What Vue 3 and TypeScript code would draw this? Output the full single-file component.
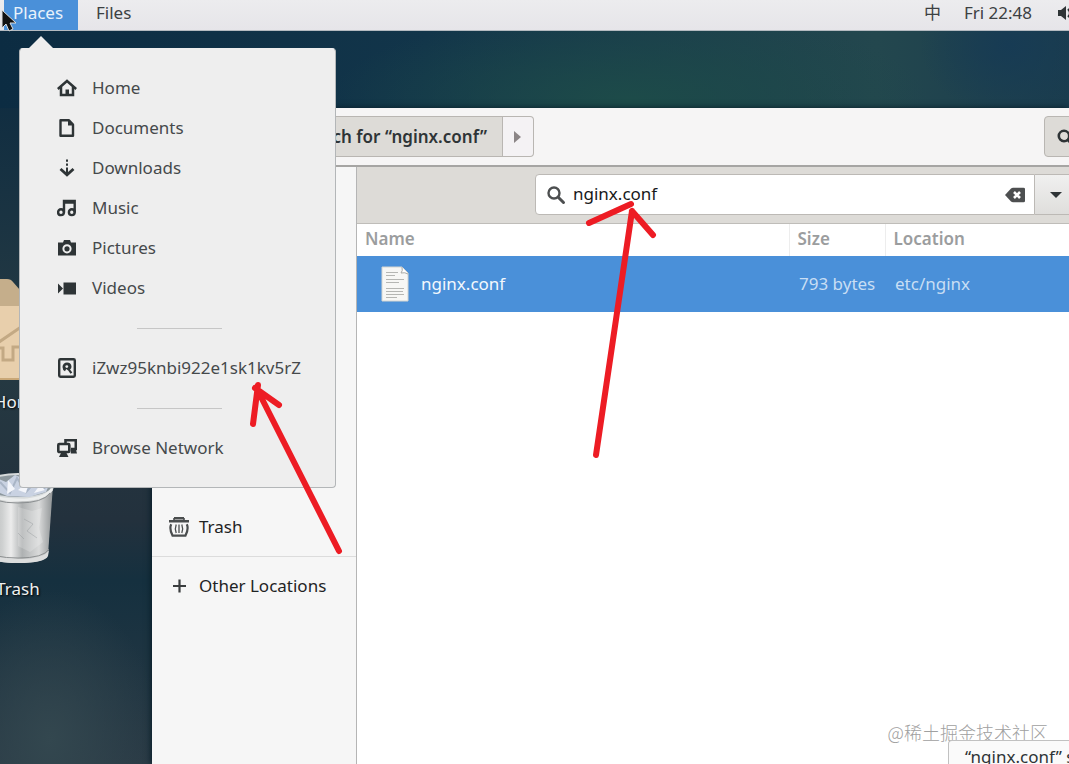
<script setup lang="ts">
import { ref } from 'vue'

interface Place {
  id: string
  label: string
}

const folders: Place[] = [
  { id: 'home', label: 'Home' },
  { id: 'documents', label: 'Documents' },
  { id: 'downloads', label: 'Downloads' },
  { id: 'music', label: 'Music' },
  { id: 'pictures', label: 'Pictures' },
  { id: 'videos', label: 'Videos' },
]

const query = ref('nginx.conf')
const files = [{ name: 'nginx.conf', size: '793 bytes', location: 'etc/nginx' }]
</script>

<template>
  <div class="desktop">
    <header class="topbar">
      <nav class="menus">
        <button class="menu-button active" type="button">Places</button>
        <button class="menu-button" type="button">Files</button>
      </nav>
      <div class="status">
        <span class="input-method">中</span>
        <time class="clock">Fri 22:48</time>
        <svg class="volume" width="16" height="16" viewBox="0 0 16 16">
          <path d="M0 5h3l5-4v14l-5-4H0z" fill="#2e3436" />
          <path d="M10 4q4 4 0 8" fill="none" stroke="#2e3436" stroke-width="2" />
        </svg>
      </div>
    </header>

    <div class="desk-icon home-icon">
      <svg width="64" height="104" viewBox="15 0 64 104">
        <path d="M0 5q0-4 4-4h32q4 0 6 3l7 8h15v30H0z" fill="#c5ae8b" />
        <path d="M0 28h64v70q0 4-4 4H4q-4 0-4-4z" fill="#e8cfac" />
        <path d="M0 100h64v2H0z" fill="#c9a777" />
        <path d="M28 64l22-15M28 70h4v12h10V69h14" fill="none" stroke="#c3a984" stroke-width="3" />
      </svg>
      <span>Home</span>
    </div>

    <div class="desk-icon trash-icon">
      <svg width="72" height="92" viewBox="0 0 72 92">
        <defs>
          <linearGradient id="bin-body" x1="0" x2="1" y1="0" y2="0">
            <stop offset="0" stop-color="#a5a8a9" />
            <stop offset="0.28" stop-color="#cfd1d1" />
            <stop offset="0.4" stop-color="#ececec" />
            <stop offset="0.56" stop-color="#aeb1b2" />
            <stop offset="0.8" stop-color="#d9dada" />
            <stop offset="1" stop-color="#8d9193" />
          </linearGradient>
        </defs>
        <path d="M1 12l5 70q3 8 30 8t30-8l5-70z" fill="url(#bin-body)" />
        <path d="M6 78q4 8 30 8t31-9l-1 6q-3 7-30 7T6 83z" fill="#dcdddd" />
        <path d="M6 77q4 8 30 8t31-9" fill="none" stroke="#8e9192" />
        <ellipse cx="36" cy="13" rx="35" ry="12" fill="#8c979d" stroke="#d6dadb" stroke-width="2" />
        <path d="M4 14l10-9 10 4 9-7 12 5 9-3 13 8-3 7-17 5-22-1z" fill="#c9d2e2" />
        <path d="M18 9l10 11 7-15 9 14 11-12 8 9" fill="none" stroke="#a9b5c6" stroke-width="2" />
        <path d="M26 7l7 9-8 5zM47 8l-3 12-8-3zM52 20l6-8 5 5z" fill="#f4f6fb" />
        <path d="M2 16q7 11 34 11t34-11" fill="none" stroke="#eceeee" stroke-width="3" />
        <path d="M3 20q8 10 33 10t32-10" fill="none" stroke="#8b8f91" />
        <path d="M36 34l14 4 10-3-3 20 4 14-13 10-12-6z" fill="#ffffff" opacity="0.2" />
        <path d="M42 46l9 5-6 7 10 7M36 60l6 6" fill="none" stroke="#8f9496" opacity="0.4" />
      </svg>
      <span>Trash</span>
    </div>

    <main class="window">
      <div class="headerbar">
        <div class="pathbar">
          <button class="crumb" type="button">Search for “nginx.conf”</button>
          <button class="crumb-next" type="button" aria-label="Next folder">
            <svg width="8" height="12" viewBox="0 0 8 12"><path d="M0 0l7 6-7 6z" fill="#8b8586" /></svg>
          </button>
        </div>
        <button class="search-toggle" type="button" aria-label="Search">
          <svg width="18" height="18" viewBox="0 0 18 18">
            <circle cx="7" cy="8" r="5.200" fill="none" stroke="#2e3436" stroke-width="2.600" />
            <path d="M11 12l5 5" stroke="#2e3436" stroke-width="3" stroke-linecap="round" />
          </svg>
        </button>
      </div>

      <div class="content">
        <aside class="sidebar">
          <a class="side-item" href="#trash">
            <svg width="20" height="20" viewBox="0 0 20 20" fill="none" stroke="#4a4d4e">
              <path d="M0 4.200h20M5 1.200h10" stroke-width="2.400" />
              <path d="M5 1v3M15 1v3" stroke-width="1.600" />
              <path d="M2.200 7.200c-1.400 3-.4 8 1.300 11.400h13c1.700-3.400 2.700-8.400 1.300-11.400" stroke-width="2.200" />
              <path d="M7.200 7.500q-1.600 4 0 8.500M12.800 7.500q1.600 4 0 8.500M10 7.500v8.500" stroke-width="1.300" />
            </svg>
            <span>Trash</span>
          </a>
          <a class="side-item other" href="#other">
            <svg width="20" height="20" viewBox="0 0 20 20"><path d="M4 10h13M10.500 3.500v13" stroke="#3a3d3e" stroke-width="2.200" /></svg>
            <span>Other Locations</span>
          </a>
        </aside>

        <section class="results">
          <form class="searchbar" @submit.prevent>
            <div class="entry">
              <svg width="20" height="20" viewBox="0 0 20 20">
                <circle cx="7" cy="8" r="5.500" fill="none" stroke="#4d4f50" stroke-width="2.400" />
                <path d="M11.500 12.500l5 5" stroke="#4d4f50" stroke-width="3" stroke-linecap="round" />
              </svg>
              <input v-model="query" type="text" aria-label="Search files" />
              <button class="clear" type="button" aria-label="Clear" @click="query = ''">
                <svg width="20" height="16" viewBox="0 0 20 16">
                  <path d="M0 8l6-6.500q1-.8 2-.8h10.500q1.500 0 1.500 1.300v12q0 1.300-1.500 1.300H8q-1 0-2-.8z" fill="#4d4f50" />
                  <path d="M9 5l6 6M15 5l-6 6" stroke="#fff" stroke-width="2.600" />
                </svg>
              </button>
            </div>
            <button class="filter" type="button" aria-label="Filter">
              <svg width="12" height="6" viewBox="0 0 12 6"><path d="M0 0h12L6 6z" fill="#2e3436" /></svg>
            </button>
          </form>

          <table class="files">
            <thead>
              <tr>
                <th scope="col">Name</th>
                <th scope="col" class="col-size">Size</th>
                <th scope="col" class="col-location">Location</th>
              </tr>
            </thead>
            <tbody>
              <tr v-for="file in files" :key="file.name">
                <td>
                  <div class="file-name">
                    <svg width="28" height="36" viewBox="0 0 28 36">
                      <path d="M1 1h20l6 6v28H1z" fill="#f7f7f5" stroke="#d5d5d0" />
                      <path d="M21 1q1 4-1 6 4-1 7 1" fill="#fff" stroke="#a9aaa6" />
                      <path d="M5 6.500h12M5 9.500h9M5 13.500h18M5 16.500h13M5 22.500h18M5 25.500h17M5 28.500h18M5 31.500h11" stroke="#b5b6b3" />
                    </svg>
                    <span>{{ file.name }}</span>
                  </div>
                </td>
                <td class="dim size">{{ file.size }}</td>
                <td class="dim location">{{ file.location }}</td>
              </tr>
            </tbody>
          </table>
        </section>
      </div>
      <span class="watermark">@稀土掘金技术社区</span>
      <div class="statusbar">“nginx.conf” selected (793 bytes)</div>
    </main>

    <nav class="places" aria-label="Places">
      <svg class="pointer" width="28" height="14" viewBox="0 0 28 14"><path d="M0 14L14 0l14 14z" fill="#eeeeee" /></svg>
      <a v-for="place in folders" :key="place.id" class="place" :href="'#' + place.id">
        <svg width="20" height="20" viewBox="0 0 20 20" fill="none" stroke="#2e3436">
          <g v-if="place.id === 'home'">
            <path d="M.8 11L10 3l9.200 8" stroke-width="2.500" />
            <path d="M4 9v8h12V9" stroke-width="2.500" />
            <path d="M8.500 11.500h3.500V17H8.500z" fill="#2e3436" stroke="none" />
          </g>
          <g v-else-if="place.id === 'documents'">
            <path d="M3.500 2.200H12L16 6.500v11.300H3.500z" stroke-width="2.400" stroke-linejoin="round" />
            <path d="M11 2v5.500h5z" fill="#2e3436" stroke="none" />
          </g>
          <g v-else-if="place.id === 'downloads'">
            <path d="M10 1.500v2.200M10 5.500v2.200M10 9.500v6" stroke-width="2" />
            <path d="M3.500 11l6.500 5.800 6.500-5.800" stroke-width="2.800" />
          </g>
          <g v-else-if="place.id === 'music'" stroke-width="2.400">
            <circle cx="4" cy="14.200" r="2.900" />
            <circle cx="14.800" cy="14.200" r="2.900" />
            <path d="M7 14.500V3h10.700v11.500M7 4.500h10" />
          </g>
          <g v-else-if="place.id === 'pictures'">
            <path d="M1 4.500h5l1-2.500h6l1 2.500h5v13H1z" fill="#2e3436" stroke="none" />
            <circle cx="10" cy="10.800" r="3.600" stroke="#eee" stroke-width="2" />
          </g>
          <g v-else fill="#2e3436" stroke="none">
            <path d="M6.500 4.500H19v12H6.500zM1 5.500l5 5-5 5z" />
          </g>
        </svg>
        <span>{{ place.label }}</span>
      </a>
      <hr />
      <a class="place" href="#computer">
        <svg width="20" height="20" viewBox="0 0 20 20">
          <rect x="2.200" y="1.200" width="15.600" height="17.600" rx="1.200" fill="none" stroke="#2e3436" stroke-width="2.400" />
          <path d="M10 4.500a4.500 4.500 0 0 0-4.500 4.500q0 3 2.500 4.300l1.200-2.300 2 1.500 2.300 3.300 1.800-1.400-2.300-2.800q1.700-1.200 1.500-3A4.500 4.500 0 0 0 10 4.500z" fill="#2e3436" />
          <circle cx="9.800" cy="8.600" r="1.400" fill="#eee" />
        </svg>
        <span>iZwz95knbi922e1sk1kv5rZ</span>
      </a>
      <hr />
      <a class="place" href="#network">
        <svg width="20" height="20" viewBox="0 0 20 20">
          <path d="M8.500 5V2.200h10.300V11H14" fill="none" stroke="#2e3436" stroke-width="2.600" />
          <rect x="1.300" y="6" width="11" height="8" rx="1" fill="#eee" stroke="#2e3436" stroke-width="2.600" />
          <path d="M4.500 14h4.500l2.500 5H2zM13.800 11h5l1.200 4.500h-6.200z" fill="#2e3436" />
        </svg>
        <span>Browse Network</span>
      </a>
    </nav>

    <svg class="annotations" width="680" height="570" viewBox="0 0 680 570">
      <g fill="none" stroke="#ed1c24" stroke-width="6" stroke-linecap="round" stroke-linejoin="round">
        <path d="M596 455L632 211M589 223L631 204M632 211L653 235" />
        <path d="M339 551L257 389M253 424L258 385M255 388L279 405" />
      </g>
    </svg>

    <svg class="cursor" width="18" height="24" viewBox="0 0 18 24">
      <path d="M2 1v18l4-4 3 7 4-2-3-6h6z" fill="#111" stroke="#ddd" stroke-width="1" />
    </svg>
  </div>
</template>

<style>
body {
  margin: 0;
}
</style>

<style scoped>
.desktop {
  position: relative;
  height: 100vh;
  overflow: hidden;
  color: #2e3436;
  font-family: "Noto Sans", "Noto Sans CJK SC", sans-serif;
  font-size: 17px;
  line-height: 24px;
  background:
    radial-gradient(ellipse 300px 90px at 630px 100px, #1d4b49, transparent),
    radial-gradient(ellipse 90px 70px at 1010px 45px, #173b54, transparent),
    radial-gradient(ellipse 110px 150px at 50px 740px, #33474f, transparent),
    linear-gradient(90deg, #0c2c42, #12354a 40%, #23474e 82%, #1a3c4e) top / 100% 108px no-repeat,
    linear-gradient(#0e2c41 10%, #253a43 45%, #23313d 68%, #15303f 76%, #2a3a45);
}

button {
  box-sizing: border-box;
  margin: 0;
  font: inherit;
  color: inherit;
}

a {
  color: inherit;
  text-decoration: none;
}

svg {
  display: block;
  flex: none;
}

.topbar {
  box-sizing: border-box;
  display: flex;
  justify-content: space-between;
  height: 31px;
  padding-left: 4px;
  overflow: hidden;
  color: #3c4042;
  background: linear-gradient(#ececee, #e6e5e9);
  border-bottom: 1px solid #b4bac0;
}

.menus,
.status {
  display: flex;
}

.menu-button {
  padding: 0 12px 4px 18px;
  border: 0;
  background: none;
}

.menu-button.active {
  width: 74px;
  padding: 0 0 4px 9px;
  text-align: left;
  color: #e9f2fb;
  background: #4a90d9;
}

.status {
  gap: 24px;
  height: 26px;
  align-items: center;
  margin-right: -5px;
}

.clock {
  margin-right: 2px;
}

.input-method {
  margin-right: -1px;
}

.desk-icon {
  position: absolute;
  display: flex;
  flex-direction: column;
  align-items: center;
  color: #eef1f2;
  text-shadow: 1px 1px 2px #000;
}

.home-icon {
  top: 278px;
  left: -14px;
  gap: 8px;
}

.trash-icon {
  top: 473px;
  left: -18px;
  gap: 12px;
}

.window {
  position: absolute;
  top: 108px;
  right: 0;
  bottom: 0;
  left: 152px;
  display: flex;
  flex-direction: column;
  background: #fff;
  box-shadow: -1px 0 6px #071c28;
}

.headerbar {
  box-sizing: border-box;
  display: flex;
  justify-content: space-between;
  height: 59px;
  padding: 8px 0 8px 120px;
  background: #f6f5f5;
  border-bottom: 2px solid #a6a5a3;
}

.pathbar {
  display: flex;
}

.crumb {
  width: 231px;
  padding: 0 15px 0 0;
  text-align: right;
  white-space: nowrap;
  font-weight: 600;
  background: #dddbd7;
  border: 1px solid #b9b6b2;
}

.crumb-next {
  display: grid;
  place-items: center;
  width: 31px;
  padding: 0;
  background: #f4f2f4;
  border: 1px solid #b9b6b2;
  border-left: 0;
  border-radius: 0 4px 4px 0;
}

.search-toggle {
  width: 34px;
  margin-right: -9px;
  padding: 0 0 0 12px;
  background: #dddbd7;
  border: 1px solid #b9b6b2;
  border-radius: 4px 0 0 4px;
}

.content {
  display: flex;
  flex: 1;
  min-height: 0;
}

.sidebar {
  box-sizing: border-box;
  width: 205px;
  padding-top: 331px;
  background: #f6f6f6;
  border-right: 1px solid #b5b5b5;
}

.side-item {
  display: flex;
  gap: 10px;
  align-items: center;
  height: 58px;
  padding-left: 17px;
  color: #1f2324;
}

.side-item.other {
  border-top: 1px solid #dcdcdc;
}

.results {
  flex: 1;
  min-width: 0;
}

.searchbar {
  box-sizing: border-box;
  display: flex;
  height: 57px;
  padding: 7px 0 8px 178px;
  background: #dddbd7;
  border-bottom: 1px solid #bfbdb9;
}

.entry {
  box-sizing: border-box;
  display: flex;
  flex: 1;
  align-items: center;
  min-width: 0;
  padding: 0 9px 0 11px;
  background: #fff;
  border: 1px solid #bcb9b5;
  border-radius: 4px 0 0 4px;
}

.entry input {
  flex: 1;
  min-width: 0;
  height: 30px;
  margin: 0;
  padding: 0 0 2px 6px;
  border: 0;
  outline: 0;
  font: inherit;
  color: #17191a;
  background: none;
}

.clear {
  padding: 0;
  border: 0;
  background: none;
}

.filter {
  width: 34px;
  padding: 0 0 0 15px;
  background: linear-gradient(#f0f0ef, #dfdedc);
  border: 1px solid #bcb9b5;
  border-width: 1px 0;
}

.files {
  width: 100%;
  border-collapse: collapse;
  table-layout: fixed;
}

.files th {
  height: 32px;
  padding: 0 0 2px 8px;
  box-sizing: border-box;
  text-align: left;
  color: #9b9d9e;
  font-weight: 600;
  border-left: 1px solid #ededed;
}

.files th:first-child {
  border-left: 0;
}

.col-size {
  width: 96px;
}

.col-location {
  width: 184px;
}

.files td {
  height: 56px;
  padding: 0;
  color: #f3f8fd;
  background: #4a90d9;
}

.file-name {
  display: flex;
  gap: 12px;
  align-items: center;
  padding-left: 24px;
}

.files .dim {
  padding-left: 10px;
  color: #c8def4;
  white-space: nowrap;
}

.watermark {
  position: absolute;
  right: 21px;
  bottom: 20px;
  color: #a0a0a0;
  font-family: "Noto Sans CJK SC", sans-serif;
  font-size: 18px;
  font-weight: 300;
}

.statusbar {
  position: absolute;
  right: 0;
  bottom: 0;
  box-sizing: border-box;
  width: 121px;
  height: 24px;
  padding: 4px 0 0 16px;
  overflow: hidden;
  white-space: nowrap;
  background: #fafafa;
  border: 1px solid #c1c1c1;
  border-width: 1px 0 0 1px;
  border-radius: 4px 0 0;
}

.places {
  position: absolute;
  top: 48px;
  left: 19px;
  box-sizing: border-box;
  width: 317px;
  padding: 19px 0;
  background: #eeeeee;
  border: 1px solid #b3b6b8;
  border-top-color: #eeeeee;
  border-radius: 4px;
}

.pointer {
  position: absolute;
  top: -13px;
  left: 7px;
}

.place {
  display: flex;
  gap: 15px;
  align-items: center;
  height: 40px;
  padding-left: 37px;
  color: #45494b;
}

.places hr {
  width: 85px;
  height: 1px;
  margin: 20px auto 19px 117px;
  border: 0;
  background: #c6c6c6;
}

.annotations,
.cursor {
  position: absolute;
  top: 0;
  left: 0;
  pointer-events: none;
}

.cursor {
  top: 9px;
}
</style>
